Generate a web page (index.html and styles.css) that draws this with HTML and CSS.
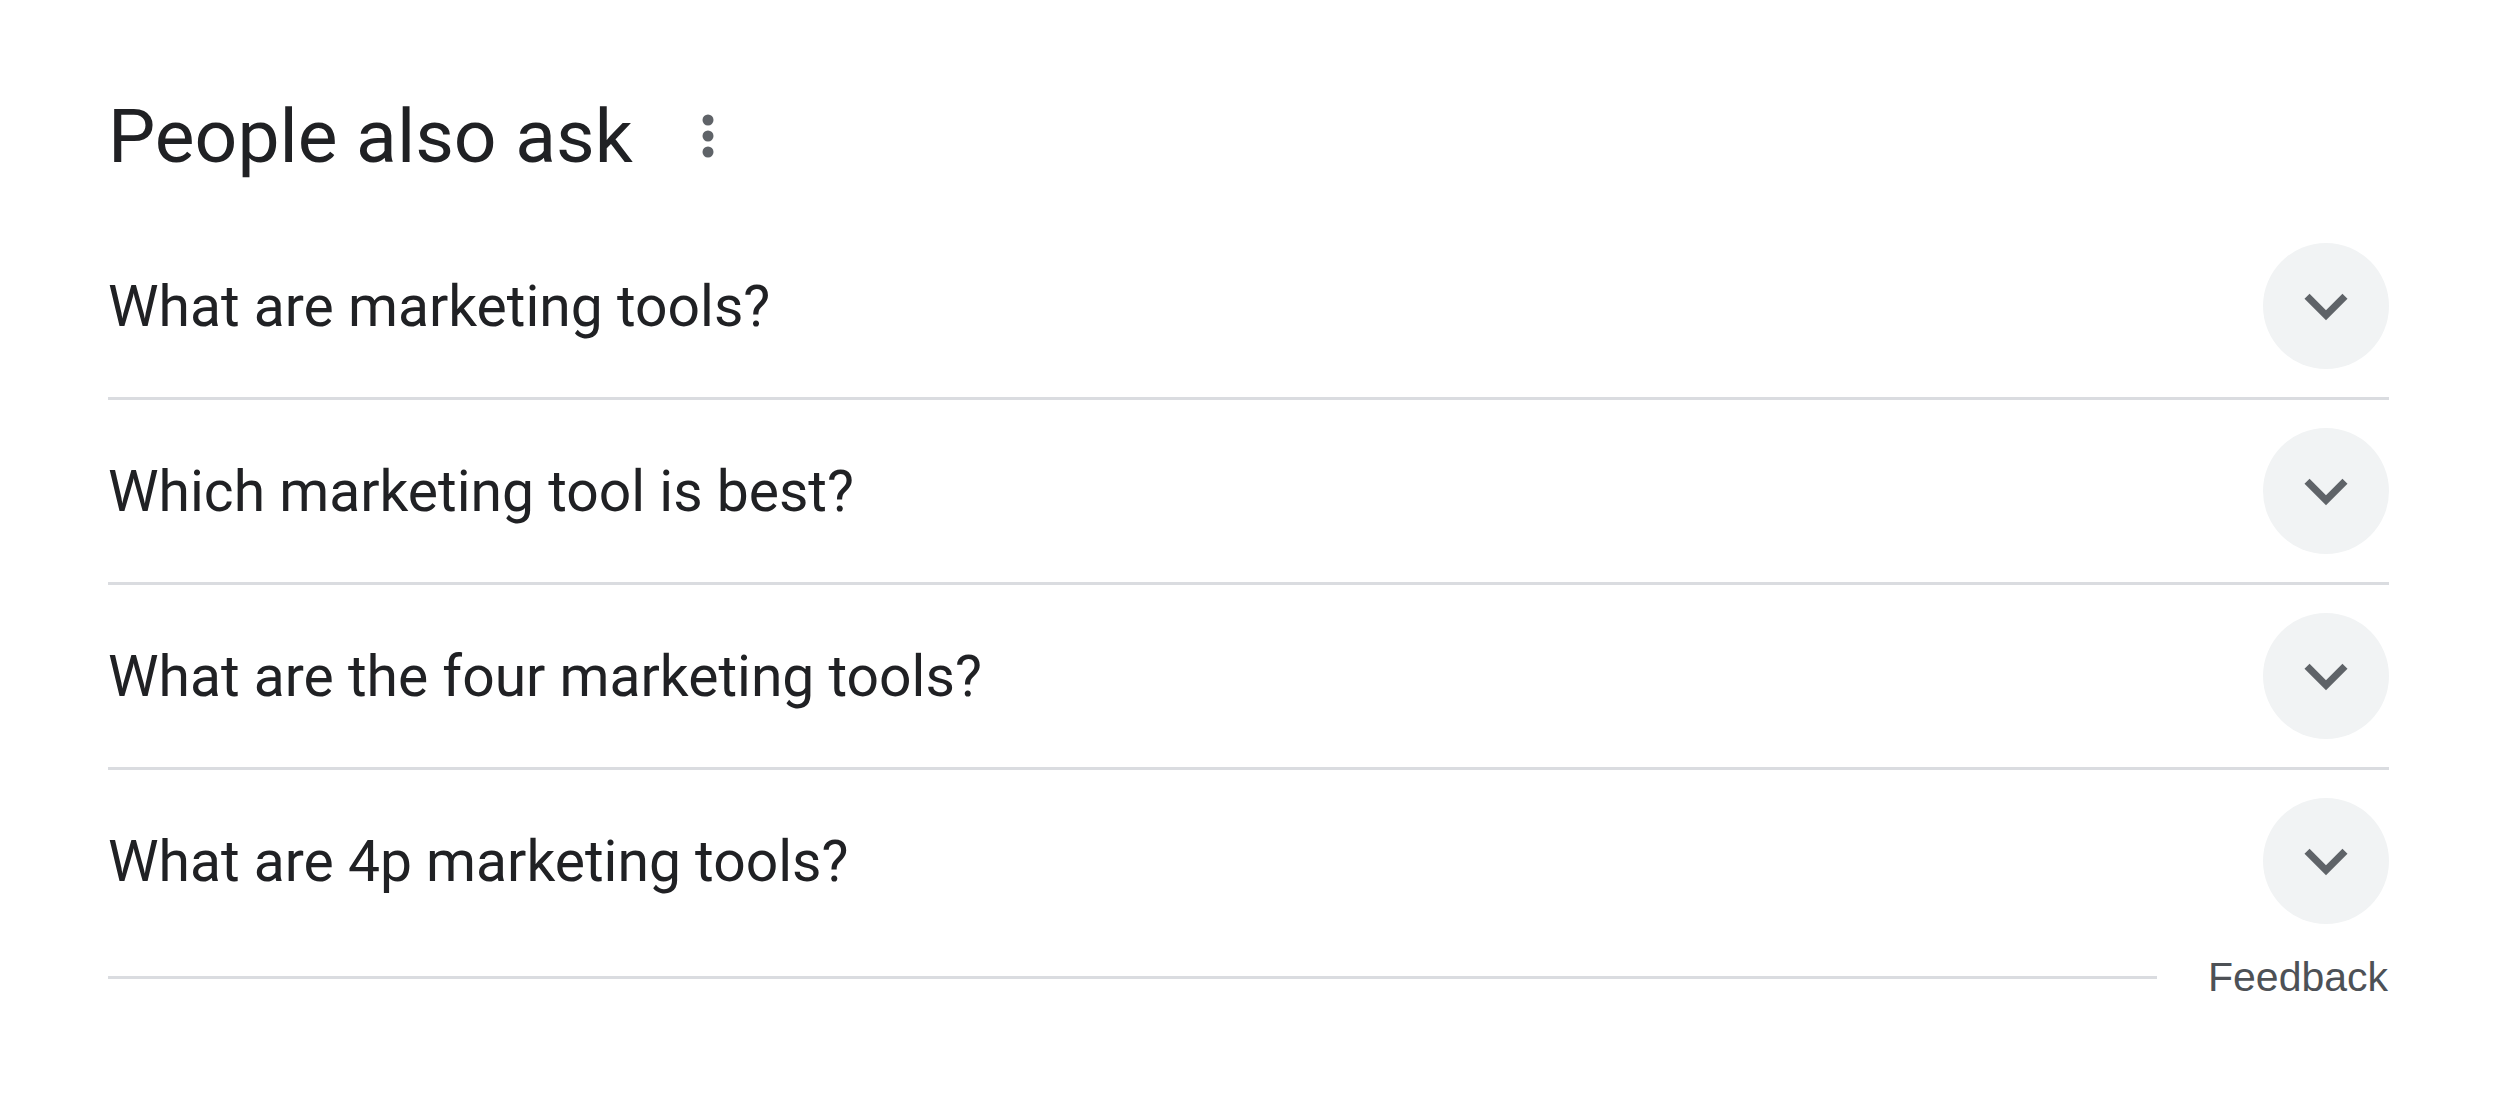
FILE: index.html
```html
<!DOCTYPE html>
<html lang="en">
<head>
<meta charset="utf-8">
<title>People also ask</title>
<link rel="stylesheet" href="styles.css">
</head>
<body>
<div class="paa">
  <div class="header">
    <h2 class="title">People also ask</h2>
    <span class="more" aria-label="More options">
      <svg width="40" height="48" viewBox="0 0 40 48"><circle cx="20" cy="8" r="5.5"/><circle cx="20" cy="24" r="5.5"/><circle cx="20" cy="40" r="5.5"/></svg>
    </span>
  </div>
  <div class="row">
    <span class="q">What are marketing tools?</span>
    <span class="btn"><svg width="86" height="86" viewBox="0 0 24 24"><path d="M16.59 8.59L12 13.17 7.41 8.59 6 10l6 6 6-6z"/></svg></span>
  </div>
  <div class="row">
    <span class="q">Which marketing tool is best?</span>
    <span class="btn"><svg width="86" height="86" viewBox="0 0 24 24"><path d="M16.59 8.59L12 13.17 7.41 8.59 6 10l6 6 6-6z"/></svg></span>
  </div>
  <div class="row">
    <span class="q">What are the four marketing tools?</span>
    <span class="btn"><svg width="86" height="86" viewBox="0 0 24 24"><path d="M16.59 8.59L12 13.17 7.41 8.59 6 10l6 6 6-6z"/></svg></span>
  </div>
  <div class="row last">
    <span class="q">What are 4p marketing tools?</span>
    <span class="btn"><svg width="86" height="86" viewBox="0 0 24 24"><path d="M16.59 8.59L12 13.17 7.41 8.59 6 10l6 6 6-6z"/></svg></span>
  </div>
  <div class="footer">
    <div class="rule"></div>
    <span class="feedback">Feedback</span>
  </div>
</div>
</body>
</html>
```
FILE: styles.css
```css
html, body {
  margin: 0;
  padding: 0;
  background: #ffffff;
}
body {
  font-family: Roboto, "Noto Sans", Arial, sans-serif;
  color: #202124;
}
.paa {
  margin-left: 108px;
  width: 2281px;
}
.header {
  display: flex;
  align-items: center;
  height: 215px;
  box-sizing: border-box;
  padding-top: 98px;
  padding-bottom: 41px;
}
.title {
  margin: 0;
  font-size: 75px;
  line-height: 76px;
  font-weight: 400;
  color: #202124;
}
.more {
  display: flex;
  margin-left: 55px;
}
.more svg {
  fill: #5f6368;
}
.row {
  display: flex;
  align-items: center;
  justify-content: space-between;
  height: 185px;
  box-sizing: border-box;
  border-bottom: 3px solid #dadce0;
}
.row.last {
  border-bottom: none;
  height: 182px;
}
.q {
  font-size: 57px;
  line-height: 1;
  color: #202124;
}
.btn {
  width: 126px;
  height: 126px;
  border-radius: 50%;
  background: #f1f3f4;
  display: flex;
  align-items: center;
  justify-content: center;
}
.btn svg {
  fill: #5f6368;
}
.footer {
  display: flex;
  align-items: center;
  height: 50px;
}
.rule {
  width: 2049px;
  height: 3px;
  background: #dadce0;
}
.feedback {
  margin-left: 51px;
  font-family: "Liberation Sans", Arial, sans-serif;
  font-size: 41px;
  color: #4d5156;
}
```
